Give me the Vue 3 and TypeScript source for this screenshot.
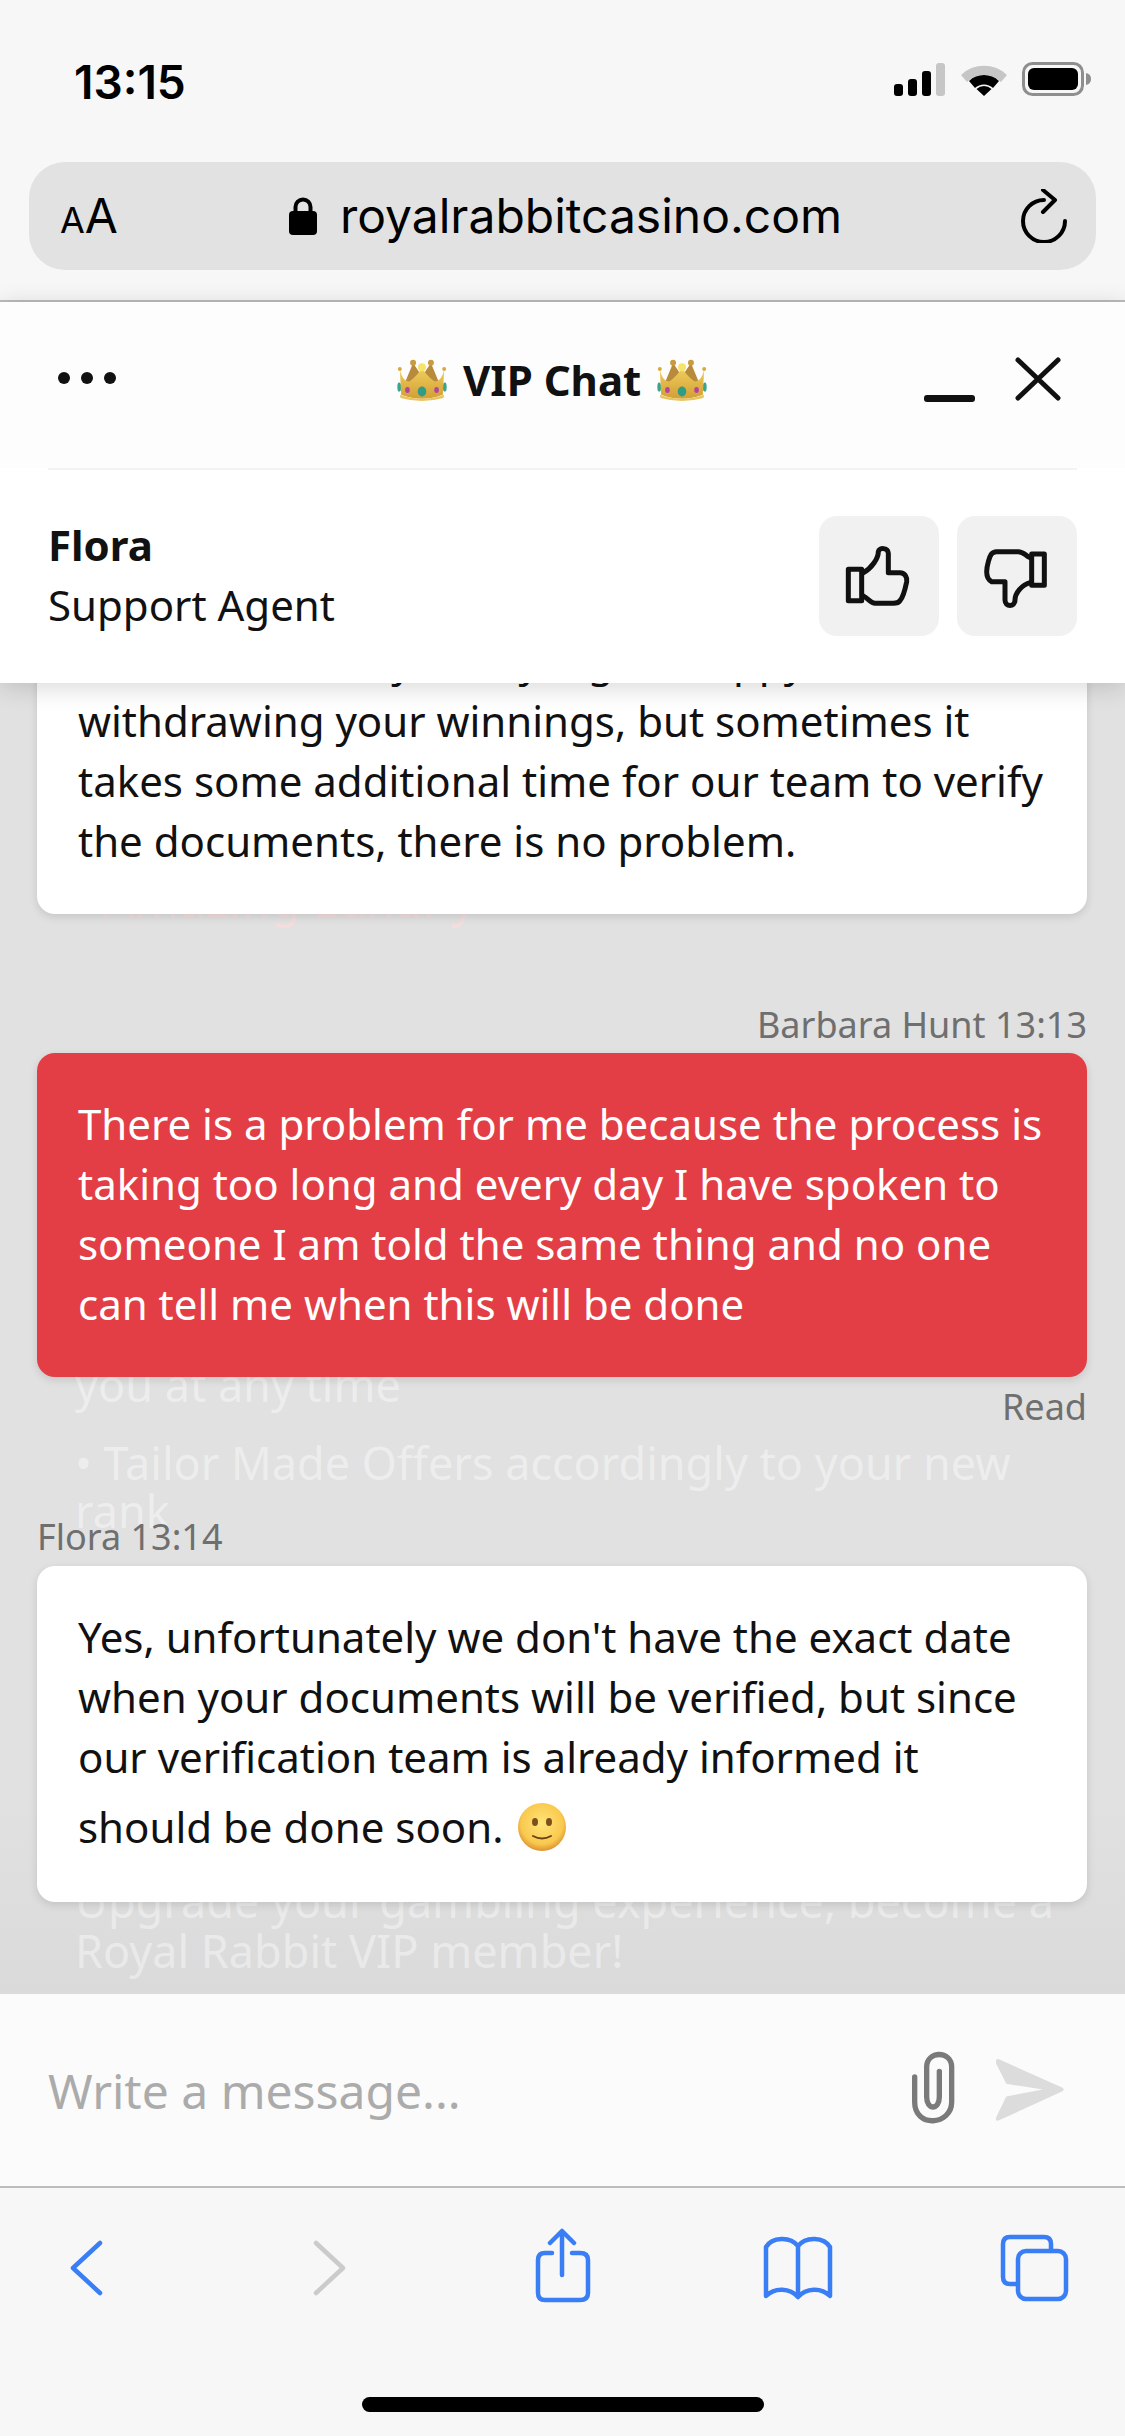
<script setup lang="ts">
const stroke = '#111111'
const firstReply: string = 'We understand you say it gets happy withdrawing your winnings, but sometimes it takes some additional time for our team to verify the documents, there is no problem.'
const customerMessage: string = 'There is a problem for me because the process is taking too long and every day I have spoken to someone I am told the same thing and no one can tell me when this will be done'
const lastReply: string = "Yes, unfortunately we don't have the exact date when your documents will be verified, but since our verification team is already informed it should be done soon."
</script>

<template>
  <div class="phone">
    <header class="browser">
      <div class="status">
        <span class="clock">13:15</span>
        <div class="status-icons">
          <svg width="52" height="33" viewBox="0 0 52 33">
            <rect x="0" y="21" width="9" height="12" rx="3" fill="#000" />
            <rect x="14" y="16" width="9" height="17" rx="3" fill="#000" />
            <rect x="28" y="8" width="9" height="25" rx="3" fill="#000" />
            <rect x="42" y="0" width="9" height="33" rx="3" fill="#c6c6c6" />
          </svg>
          <svg width="46" height="34" viewBox="0 0 46 34">
            <path d="M0 13 A33 33 0 0 1 46 13 L40 20 A24 24 0 0 0 6 20 Z" fill="#c6c6c6" />
            <path d="M8 19 A22 22 0 0 1 38 19 L32 26 A13 13 0 0 0 14 26 Z" fill="#000" />
            <path d="M15.500 27 A11 11 0 0 1 30.500 27 L23 34 Z" fill="#000" />
          </svg>
          <svg width="70" height="34" viewBox="0 0 70 34">
            <rect x="1.500" y="1.500" width="59" height="31" rx="9" fill="none" stroke="#8e8e8e" stroke-width="3" />
            <rect x="6" y="6" width="50" height="22" rx="6" fill="#000" />
            <path d="M64 11 Q69 12 69 17 Q69 22 64 23 Z" fill="#8e8e8e" />
          </svg>
        </div>
      </div>
      <div class="address">
        <span class="aa"><small>A</small>A</span>
        <div class="site">
          <svg width="28" height="38" viewBox="0 0 28 38">
            <path d="M6.500 16 V10 A7.500 7.500 0 0 1 21.500 10 V16" fill="none" stroke="#000" stroke-width="4" />
            <rect x="0" y="14" width="28" height="24" rx="4" fill="#000" />
          </svg>
          <span>royalrabbitcasino.com</span>
        </div>
        <svg width="46" height="54" viewBox="0 0 46 54">
          <path d="M23 11 A21 21 0 1 0 44 32" fill="none" stroke="#000" stroke-width="4" stroke-linecap="round" />
          <path d="M22 1 L34 11 L22 23" fill="none" stroke="#000" stroke-width="4" stroke-linecap="round" stroke-linejoin="round" />
        </svg>
      </div>
    </header>

    <section class="head">
      <div class="title-row">
        <div class="dots"><i></i><i></i><i></i></div>
        <div class="title">
          <svg class="crown" width="50" height="43" viewBox="0 0 150 130">
            <defs>
              <linearGradient id="gold" x1="0" y1="0" x2="0" y2="1">
                <stop offset="0" stop-color="#f0cf5e" />
                <stop offset="1" stop-color="#d39f35" />
              </linearGradient>
              <symbol id="crown-art" viewBox="0 0 150 130">
                <ellipse cx="6" cy="85" rx="6" ry="14" fill="#3aa58d" />
                <ellipse cx="144" cy="85" rx="6" ry="14" fill="#3aa58d" />
                <path d="M22 75 L48 12 L75 52 L102 12 L128 75 Z" fill="#b88a3c" />
                <circle cx="48" cy="11" r="9" fill="#c99a3e" />
                <circle cx="102" cy="11" r="9" fill="#c99a3e" />
                <circle cx="8" cy="30" r="6" fill="#d8a93e" />
                <circle cx="142" cy="30" r="6" fill="#d8a93e" />
                <path d="M8 32 C14 62 30 72 40 66 C55 55 68 40 75 26 C82 40 95 55 110 66 C120 72 136 62 142 32 L138 108 Q75 132 12 108 Z" fill="url(#gold)" />
                <circle cx="75" cy="25" r="12" fill="#f8e36a" />
                <ellipse cx="75" cy="98" rx="13" ry="15" fill="#2f9c85" />
                <ellipse cx="31" cy="94" rx="7" ry="9" fill="#b6429f" />
                <ellipse cx="119" cy="94" rx="7" ry="9" fill="#b6429f" />
                <path d="M8 108 Q75 132 142 108 L140 118 Q75 136 10 118 Z" fill="#e8c65e" />
              </symbol>
            </defs>
            <use href="#crown-art" />
          </svg>
          <span>VIP Chat</span>
          <svg class="crown" width="50" height="43" viewBox="0 0 150 130"><use href="#crown-art" /></svg>
        </div>
        <div class="window-actions">
          <span class="minimize"></span>
          <svg width="46" height="44" viewBox="0 0 46 44">
            <path d="M3 3 L43 41 M43 3 L3 41" :stroke="stroke" stroke-width="5" stroke-linecap="round" fill="none" />
          </svg>
        </div>
      </div>
      <div class="rule"></div>
      <div class="agent">
        <div class="agent-text">
          <strong>Flora</strong>
          <span>Support Agent</span>
        </div>
        <div class="rate">
          <button type="button" class="rate-btn">
            <svg width="120" height="120" viewBox="57 78 360 360" fill="none" :stroke="stroke" stroke-width="15" stroke-linejoin="round" stroke-linecap="round">
              <rect x="145" y="238" width="40" height="94" />
              <path d="M190 248 C215 235 235 205 235 185 C237 172 265 172 265 190 L265 248 L300 248 C315 248 322 262 320 275 C315 300 310 320 300 332 C295 340 285 340 280 340 L225 340 C212 340 205 325 190 318" />
            </svg>
          </button>
          <button type="button" class="rate-btn">
            <svg width="120" height="120" viewBox="471 78 360 360" fill="none" :stroke="stroke" stroke-width="15" stroke-linejoin="round" stroke-linecap="round">
              <rect x="695" y="192" width="38" height="94" />
              <path d="M688 202 C675 195 670 185 655 185 L590 185 C575 185 570 195 565 215 C558 240 555 265 575 275 L615 275 L615 330 C615 352 645 352 645 330 C645 310 665 285 690 278" />
            </svg>
          </button>
        </div>
      </div>
    </section>

    <main class="chat">
      <div class="ghost">
        <p class="ghost-pink">Amazing Luxur<span>y</span></p>
        <p class="ghost-a">you at any time</p>
        <p class="ghost-b">• Tailor Made Offers accordingly to your new rank</p>
        <p class="ghost-c">Upgrade your gambling experience, become a Royal Rabbit VIP member!</p>
      </div>
      <div class="messages">
        <div class="bubble first">{{ firstReply }}</div>
        <div class="meta right barbara">Barbara Hunt 13:13</div>
        <div class="bubble red">{{ customerMessage }}</div>
        <div class="meta right read">Read</div>
        <div class="meta flora">Flora 13:14</div>
        <div class="bubble">
          {{ lastReply }}
          <svg class="smile" width="48" height="48" viewBox="0 0 48 48">
            <defs>
              <radialGradient id="smile-face" cx="0.5" cy="0.42" r="0.58">
                <stop offset="0" stop-color="#ffe578" />
                <stop offset="0.75" stop-color="#f9c94f" />
                <stop offset="1" stop-color="#dd9330" />
              </radialGradient>
            </defs>
            <circle cx="24" cy="24" r="24" fill="url(#smile-face)" />
            <ellipse cx="17" cy="19" rx="3" ry="4" fill="#7d4f1b" />
            <ellipse cx="31" cy="19" rx="3" ry="4" fill="#7d4f1b" />
            <path d="M15 33 Q24 38 33 33" fill="none" stroke="#6b4318" stroke-width="2" stroke-linecap="round" />
          </svg>
        </div>
      </div>
    </main>

    <footer class="composer">
      <span class="placeholder">Write a message...</span>
      <div class="composer-icons">
        <svg class="clip" width="55" height="80" viewBox="75 45 165 240" fill="none" stroke="#7a7a7a" stroke-width="16" stroke-linecap="round">
          <path d="M104 135 L104 210 C104 290 215 280 215 210 L215 105 C215 55 140 55 140 105 L140 195 C140 235 178 235 178 195 L178 118" />
        </svg>
        <svg width="73" height="67" viewBox="340 85 220 200">
          <path d="M358 91 L548 176 Q558 182 548 188 L358 275 Q345 279 350 265 L380 203 L490 182 L380 165 L350 105 Q346 87 358 91 Z" fill="#dcdcdc" />
        </svg>
      </div>
    </footer>

    <nav class="toolbar">
      <div class="tools">
        <svg width="72" height="80" viewBox="50 2228 72 80" fill="none" stroke="#3a7ef6" stroke-width="4.500" stroke-linecap="round" stroke-linejoin="round">
          <path d="M100 2243 L73 2268 L100 2293" />
        </svg>
        <svg width="72" height="80" viewBox="287 2228 72 80" fill="none" stroke="#cbcbcb" stroke-width="4.500" stroke-linecap="round" stroke-linejoin="round">
          <path d="M316 2243 L343 2268 L316 2293" />
        </svg>
        <svg width="72" height="80" viewBox="524 2228 72 80" fill="none" stroke="#3a7ef6" stroke-width="4.500" stroke-linecap="round" stroke-linejoin="round">
          <path d="M552 2253 L545 2253 Q538 2253 538 2260 L538 2293 Q538 2300 545 2300 L580 2300 Q588 2300 588 2293 L588 2260 Q588 2253 580 2253 L572 2253" />
          <path d="M562 2275 V2232 M550 2243 L562 2231 L574 2243" />
        </svg>
        <svg width="72" height="80" viewBox="761 2228 72 80" fill="none" stroke="#3a7ef6" stroke-width="4.500" stroke-linecap="round" stroke-linejoin="round">
          <path d="M798 2246 C790 2236 772 2237 766 2247 L766 2296 C775 2287 790 2288 798 2297 C806 2288 821 2287 830 2296 L830 2247 C824 2237 806 2236 798 2246 Z M798 2246 V2297" />
        </svg>
        <svg width="72" height="80" viewBox="998 2228 72 80" fill="none" stroke="#3a7ef6" stroke-width="4.500" stroke-linecap="round" stroke-linejoin="round">
          <path d="M1017 2284 H1010 Q1003 2284 1003 2277 V2244 Q1003 2237 1010 2237 H1044 Q1051 2237 1051 2244 V2251" />
          <rect x="1018" y="2251" width="48" height="48" rx="8" />
        </svg>
      </div>
      <div class="home-bar"></div>
    </nav>
  </div>
</template>

<style scoped>
.phone {
  width: 1125px;
  height: 2436px;
  display: flex;
  flex-direction: column;
  overflow: hidden;
  font-family: "Noto Sans", sans-serif;
  color: #111;
}
.browser {
  height: 302px;
  box-sizing: border-box;
  flex: none;
  background: #f7f7f7;
  border-bottom: 2px solid #bcbcbc;
  padding-top: 54px;
}
.status {
  height: 50px;
  display: flex;
  align-items: center;
  justify-content: space-between;
  padding: 0 33px 0 74px;
}
.clock {
  font: 600 46px/50px Inter, "Liberation Sans", sans-serif;
  color: #000;
  margin-top: 5px;
}
.status-icons {
  display: flex;
  align-items: center;
  gap: 15px;
}
.address {
  margin: 58px 29px 0;
  height: 108px;
  border-radius: 36px;
  background: #e2e2e2;
  display: flex;
  align-items: center;
  justify-content: space-between;
  padding: 0 29px 0 31px;
  color: #000;
  font-family: Inter, "Liberation Sans", sans-serif;
}
.aa {
  font-size: 48px;
  line-height: 50px;
  margin-top: 4px;
}
.aa small {
  font-size: 36px;
}
.site {
  display: flex;
  align-items: center;
  gap: 23px;
  font-size: 48px;
  line-height: 60px;
  margin-right: 8px;
}
.head {
  height: 381px;
  flex: none;
  position: relative;
  z-index: 2;
  background: #fff;
  box-shadow: 0 4px 24px rgba(0, 0, 0, 0.16);
}
.title-row {
  height: 166px;
  position: relative;
  display: flex;
  align-items: center;
  justify-content: space-between;
  padding: 0 64px 0 58px;
  background: #fdfdfd;
}
.dots {
  display: flex;
  gap: 11px;
  margin-top: -14px;
}
.dots i {
  width: 12px;
  height: 12px;
  border-radius: 50%;
  background: #111;
}
.title {
  position: absolute;
  left: 397px;
  top: 56px;
  display: flex;
  align-items: center;
  gap: 16px;
  font-size: 42px;
  font-weight: 700;
  line-height: 44px;
}
.window-actions {
  display: flex;
  align-items: center;
  gap: 40px;
  margin-top: -12px;
}
.minimize {
  width: 51px;
  height: 7px;
  margin-top: 38px;
  border-radius: 3px;
  background: #111;
}
.rule {
  height: 2px;
  margin: 0 48px;
  background: #f3f3f3;
}
.agent {
  display: flex;
  align-items: center;
  justify-content: space-between;
  padding: 46px 48px 47px;
}
.agent-text {
  display: flex;
  flex-direction: column;
  font-size: 42px;
  line-height: 60px;
  margin-top: -3px;
}
.rate {
  display: flex;
  gap: 18px;
}
.rate-btn {
  width: 120px;
  height: 120px;
  padding: 0;
  border: 0;
  border-radius: 18px;
  background: #f1f1f1;
}
.rate-btn svg {
  display: block;
}
.chat {
  flex: 1;
  min-height: 0;
  position: relative;
  overflow: hidden;
  background: linear-gradient(#e1e1e1 85%, #dadada);
}
.ghost {
  position: absolute;
  inset: 0;
  padding: 186px 38px 0 75px;
  color: rgba(255, 255, 255, 0.42);
  font-size: 45px;
  line-height: 48px;
}
.ghost p {
  margin: 0;
}
.ghost .ghost-pink {
  font-size: 48px;
  line-height: 60px;
  color: #f3dddd;
  padding-left: 28px;
}
.ghost-pink span {
  margin-left: 9px;
}
.ghost .ghost-a {
  margin-top: 432px;
}
.ghost .ghost-b {
  margin-top: 30px;
}
.ghost .ghost-c {
  margin-top: 341px;
  line-height: 50px;
}
.messages {
  position: relative;
  display: flex;
  flex-direction: column;
  padding: 0 38px 0 37px;
}
.bubble {
  padding: 41px 41px 43px;
  border-radius: 18px;
  background: #fff;
  box-shadow: 0 3px 8px rgba(0, 0, 0, 0.12);
  font-size: 42px;
  line-height: 60px;
}
.bubble.first {
  margin-top: -93px;
}
.bubble.red {
  background: #e33e45;
  color: #fff;
}
.meta {
  font-size: 36px;
  line-height: 48px;
  color: #6f6f6f;
}
.right {
  text-align: right;
}
.barbara {
  margin: 87px 0 4px;
}
.read {
  margin-top: 6px;
}
.flora {
  margin: 82px 0 5px;
}
.smile {
  vertical-align: -16px;
  margin: 16px 0 8px 4px;
}
.composer {
  height: 192px;
  flex: none;
  box-sizing: border-box;
  display: flex;
  align-items: center;
  justify-content: space-between;
  padding: 0 59px 0 48px;
  background: #fbfbfb;
}
.placeholder {
  font-size: 48px;
  color: #ababab;
}
.composer-icons {
  display: flex;
  align-items: center;
  gap: 33px;
}
.clip {
  margin-top: -6px;
}
.toolbar {
  height: 250px;
  flex: none;
  box-sizing: border-box;
  border-top: 2px solid #bcbcbc;
  background: #f7f7f7;
  padding-top: 40px;
  display: flex;
  flex-direction: column;
  align-items: center;
}
.tools {
  width: 100%;
  box-sizing: border-box;
  padding: 0 55px 0 50px;
  display: flex;
  justify-content: space-between;
}
.home-bar {
  width: 402px;
  height: 15px;
  margin-top: 89px;
  border-radius: 8px;
  background: #000;
}
</style>

<style>
html, body {
  margin: 0;
  background: #f7f7f7;
}
</style>
